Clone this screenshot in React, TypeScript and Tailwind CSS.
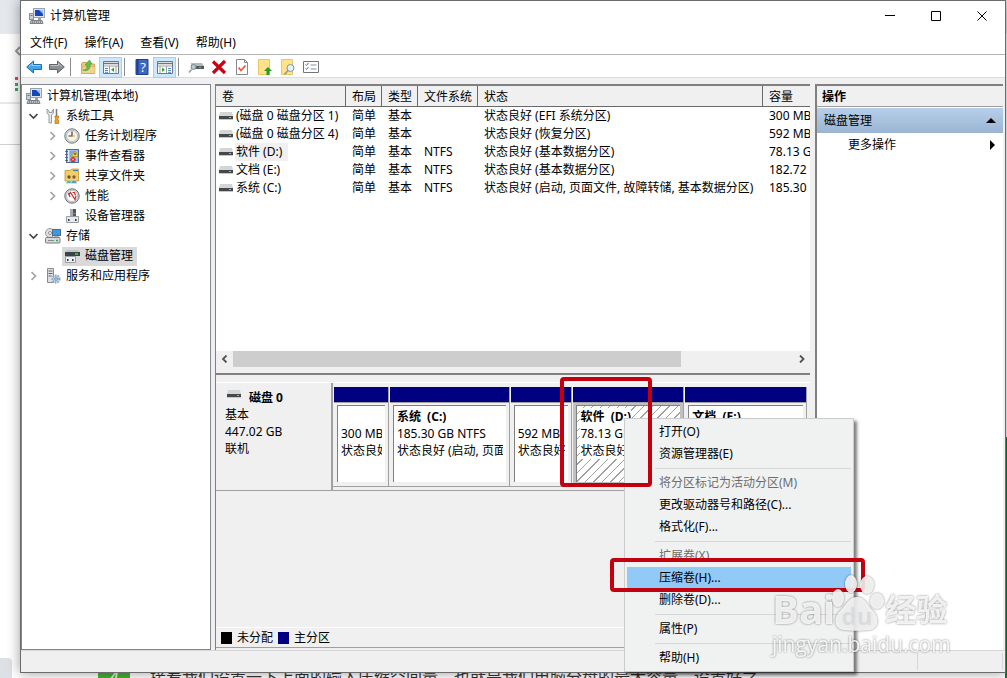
import type { ReactNode } from "react";
import clsx from "clsx";

interface Volume {
  name: string;
  layout: string;
  type: string;
  fs: string;
  status: string;
  capacity: string;
}

const VOLUMES: Volume[] = [
  { name: "(磁盘 0 磁盘分区 1)", layout: "简单", type: "基本", fs: "", status: "状态良好 (EFI 系统分区)", capacity: "300 MB" },
  { name: "(磁盘 0 磁盘分区 4)", layout: "简单", type: "基本", fs: "", status: "状态良好 (恢复分区)", capacity: "592 MB" },
  { name: "软件 (D:)", layout: "简单", type: "基本", fs: "NTFS", status: "状态良好 (基本数据分区)", capacity: "78.13 GB" },
  { name: "文档 (E:)", layout: "简单", type: "基本", fs: "NTFS", status: "状态良好 (基本数据分区)", capacity: "182.72 GB" },
  { name: "系统 (C:)", layout: "简单", type: "基本", fs: "NTFS", status: "状态良好 (启动, 页面文件, 故障转储, 基本数据分区)", capacity: "185.30 GB" },
];

const SELECTED_VOLUME = "软件 (D:)";

interface Partition {
  name: string;
  size: string;
  status: string;
  selected?: boolean;
}

const PARTITIONS: Partition[] = [
  { name: "", size: "300 MB", status: "状态良好" },
  { name: "系统  (C:)", size: "185.30 GB NTFS", status: "状态良好 (启动, 页面" },
  { name: "", size: "592 MB", status: "状态良好" },
  { name: "软件  (D:)", size: "78.13 GB NTFS", status: "状态良好 (基本", selected: true },
  { name: "文档  (E:)", size: "182.72 GB NTFS", status: "状态良好 (基本" },
];

interface MenuEntry {
  label: string;
  disabled?: boolean;
  active?: boolean;
}

// 每组之间用分隔线隔开
const CONTEXT_MENU: MenuEntry[][] = [
  [{ label: "打开(O)" }, { label: "资源管理器(E)" }],
  [{ label: "将分区标记为活动分区(M)", disabled: true }, { label: "更改驱动器号和路径(C)..." }, { label: "格式化(F)..." }],
  [{ label: "扩展卷(X)", disabled: true }, { label: "压缩卷(H)...", active: true }, { label: "删除卷(D)..." }],
  [{ label: "属性(P)" }],
  [{ label: "帮助(H)" }],
];

function Icon({ children, className = "size-4" }: { children: ReactNode; className?: string }) {
  return (
    <svg viewBox="0 0 16 16" className={clsx("shrink-0", className)} fill="none" aria-hidden="true">
      {children}
    </svg>
  );
}

function ComputerIcon() {
  return (
    <Icon>
      <rect x="4.5" y="0.5" width="11" height="9" fill="#dfe3e8" stroke="#9aa2ab" />
      <rect x="6" y="2" width="8" height="6" fill="#1646b8" />
      <path d="M10 2h4v4z" fill="#8fc0ff" />
      <path d="M9 10h3v2H9z" fill="#9aa1a8" />
      <rect x="0.5" y="5.5" width="4" height="6" fill="#c9ced3" stroke="#8a949e" />
      <path d="M1.500 7.500h2" stroke="#2aa03c" />
      <path d="M2 12.500h11l1 3H1z" fill="#b9c0c8" stroke="#7a828b" />
      <path d="M3 14h9" stroke="#555" strokeDasharray="1 1" />
    </Icon>
  );
}

function ToolsIcon() {
  return (
    <Icon>
      <path d="M2 1v4l2 2v8h2.500V7l2-2V1L7 3v1.500H4V3z" fill="#e8eaec" stroke="#80868c" strokeWidth=".8" />
      <path d="M11.500 1v7" stroke="#777" strokeWidth="1.500" />
      <path d="M10 8h3.500v2l-.5.500v1l.5.500v3.500H10V12l.5-.5v-1L10 10z" fill="#f0a020" stroke="#b57208" strokeWidth=".7" />
    </Icon>
  );
}

function ClockIcon() {
  return (
    <Icon>
      <circle cx="8" cy="8" r="7.200" fill="#d5d9dd" stroke="#74797e" />
      <circle cx="8" cy="8" r="5.500" fill="#f7f3e6" stroke="#a6abb0" strokeWidth=".6" />
      <path d="M8 3.500V8H4.500" stroke="#39424d" strokeWidth="1.200" />
      <path d="M8 8h3" stroke="#e0a02a" />
    </Icon>
  );
}

function EventIcon() {
  return (
    <Icon>
      <rect x="2.500" y="1.500" width="12" height="13" fill="#9dc0ea" stroke="#4a6b9c" />
      <path d="M4.500 2v12" stroke="#e8f0fa" />
      <path d="M6 4h4M6 6h2M6 8h1" stroke="#5c7fb0" strokeWidth=".8" />
      <path d="M1 3.500h3M1 6.500h3M1 9.500h3M1 12.500h3" stroke="#555" strokeWidth=".8" />
      <path d="M11 3l3.500 5.500h-7z" fill="#ffd233" stroke="#a97a00" strokeWidth=".6" />
      <path d="M11 5v2" stroke="#222" />
      <circle cx="9" cy="11.500" r="2.600" fill="#d8272c" />
      <path d="M8 10.500l2 2m0-2l-2 2" stroke="#fff" strokeWidth=".8" />
    </Icon>
  );
}

function SharedIcon() {
  return (
    <Icon>
      <path d="M1 5V2.500h5L8 1h6.500v12H1z" fill="#f2cf66" stroke="#c39531" strokeWidth=".8" />
      <path d="M9 2.500h5" stroke="#3b7fd0" strokeWidth="1.200" />
      <circle cx="5" cy="9" r="1.700" fill="#6b563d" />
      <circle cx="10" cy="9" r="1.700" fill="#8a5a2b" />
      <path d="M2 15.500c0-4.500 6-4.500 6 0z" fill="#5fbb94" stroke="#fff" strokeWidth=".4" />
      <path d="M7 15.500c0-4.500 6-4.500 6 0z" fill="#5b98d6" stroke="#fff" strokeWidth=".4" />
    </Icon>
  );
}

function PerformanceIcon() {
  return (
    <Icon>
      <circle cx="8" cy="8" r="7.200" fill="#d5d5d8" stroke="#6e6e72" />
      <circle cx="8" cy="8" r="5.500" fill="#fff" stroke="#999" strokeWidth=".5" />
      <path d="M4.500 6.500l2-2 4.500 7 1-3.500" stroke="#cf2b2f" strokeWidth="1.200" />
      <path d="M4.500 5l1.500 4M8.500 4.500h2l1 3" stroke="#cf2b2f" strokeWidth="1.200" />
    </Icon>
  );
}

function DeviceIcon() {
  return (
    <Icon>
      <path d="M6 1h6v8H6z" fill="#50565c" />
      <path d="M6 1h3v7H6z" fill="#a5abb0" />
      <path d="M9.500 5.500h2" stroke="#2fd04c" />
      <path d="M2.500 8.500h12v6h-12z" fill="#e7e9eb" stroke="#989da2" />
      <path d="M4 11h1.500v2H4zM11 11h1.500v2H11z" fill="#33383d" />
    </Icon>
  );
}

function StorageIcon() {
  return (
    <Icon>
      <circle cx="5" cy="5" r="4.500" fill="#dfe2e5" stroke="#90969c" />
      <circle cx="5" cy="5" r="1.500" fill="#fff" stroke="#8b9197" />
      <rect x="7.500" y="1.500" width="8" height="6" fill="#3a98e8" stroke="#5b6b7c" />
      <path d="M9 9h5" stroke="#666" />
      <rect x="0.500" y="9.500" width="14.500" height="5.500" rx="1" fill="#d8dadd" stroke="#777d83" />
      <path d="M3 12.500h6" stroke="#888" />
      <path d="M11 12.500h2" stroke="#22b53d" strokeWidth="1.500" />
    </Icon>
  );
}

function DiskMgmtIcon() {
  return (
    <Icon>
      <path d="M3 2h11l2 2H1z" fill="#bfc4c8" />
      <path d="M1 4h15v4H1z" fill="#3d4246" />
      <path d="M11 6h3" stroke="#2fe04c" strokeWidth="1.500" />
      <path d="M1.500 8.500h10v6h-10z" fill="#eceeef" stroke="#9a9fa4" />
      <path d="M3 11h1.500v2H3zM8 11h1.500v2H8z" fill="#33383d" />
    </Icon>
  );
}

function ServicesIcon() {
  return (
    <Icon>
      <path d="M2.500 .5h6v14h-6z" fill="#dde0e3" stroke="#868c92" />
      <path d="M3.500 3h4M3.500 5.500h4M3.500 8h3" stroke="#666" />
      <circle cx="11" cy="11" r="3.500" fill="#c9dcef" stroke="#7f9fc0" strokeDasharray="1.500 1" strokeWidth="2" />
      <circle cx="11" cy="11" r="1.300" fill="#fff" stroke="#5e83a8" />
    </Icon>
  );
}

function DriveIcon() {
  return (
    <svg viewBox="0 0 14 8" className="h-2 w-3.5 shrink-0" aria-hidden="true">
      <path d="M1 0h12l1 4H0z" fill="#d3d5d7" />
      <path d="M0 4h14v3H0z" fill="#46494c" />
      <path d="M0 7h14v1H0z" fill="#c4c7c9" />
      <path d="M10 5h2v1h-2z" fill="#3cf05a" />
    </svg>
  );
}

function ArrowIcon({ flip, fill, stroke }: { flip?: boolean; fill: string; stroke: string }) {
  return (
    <Icon className={clsx("size-4", flip && "-scale-x-100")}>
      <path d="M.7 8L7.500 2v3.500h8v5h-8V14z" fill={fill} stroke={stroke} />
      <path d="M3 7.500l3.500-3v2h8" stroke="#fff" strokeOpacity=".45" />
    </Icon>
  );
}

function FolderUpIcon() {
  return (
    <Icon>
      <path d="M1.500 14.500V4.500l1-1h4l1 1.500h7v9.500z" fill="#edc778" stroke="#cfa75c" />
      <path d="M1.500 14.500l1-7h12.500v7z" fill="#f2d38d" stroke="#cfa75c" strokeWidth=".6" />
      <path d="M3 11c3 0 4.500-2 4-5H5l4.500-5L12 5h-2c1 5-3 8-7 6z" fill="#5bc44d" stroke="#3a9a30" strokeWidth=".6" />
    </Icon>
  );
}

function PaneIcon({ flip }: { flip?: boolean }) {
  return (
    <Icon className={clsx("size-4", flip && "-scale-x-100")}>
      <path d="M.5 2.500h15v12H.5z" fill="#fff" stroke="#71767c" />
      <path d="M1 4.500h14" stroke="#71767c" strokeWidth="1.500" />
      <path d="M.5 7h15M6.500 7v7.500M13 7v7.500" stroke="#888" strokeWidth=".8" />
      <path d="M2 9.500h3M2 11.500h3M2 13.300h3" stroke="#3e78bd" strokeWidth=".9" />
      <path d="M11 8.500v4.500L8 10.800z" fill="#35a52c" />
    </Icon>
  );
}

function HelpIcon() {
  return (
    <Icon>
      <path d="M2 .5h12v15H2z" fill="#3c68c4" stroke="#20408c" />
      <path d="M2.500 1h2v14h-2z" fill="#20408c" />
      <text x="9" y="12.500" fontSize="13" textAnchor="middle" fill="#fff" fontFamily="Open Sans, sans-serif">
        ?
      </text>
    </Icon>
  );
}

function ConnectIcon() {
  return (
    <Icon>
      <path d="M3 4h11l2 3v3H3z" fill="#b4b9bd" />
      <path d="M3 7h13v3H3z" fill="#50565b" />
      <path d="M11 8.500h2" stroke="#32d44c" strokeWidth="1.500" />
      <circle cx="5.500" cy="8" r="2.500" fill="#b9c9d6" stroke="#7c8a95" />
      <path d="M3.500 10.500L1 13.500" stroke="#9aa0a6" strokeWidth="1.800" />
    </Icon>
  );
}

function DeleteIcon() {
  return (
    <Icon>
      <path d="M2 2.500L14 14M14 2L2 14" stroke="#c80414" strokeWidth="3.200" />
    </Icon>
  );
}

function CheckDocIcon() {
  return (
    <Icon>
      <path d="M2.500 .5h8l3 3v12h-11z" fill="#fff" stroke="#85898e" />
      <path d="M10.500 .5v3h3" stroke="#85898e" />
      <path d="M4.500 8.500L7 11.500l4.500-5" stroke="#ef5a33" strokeWidth="1.800" />
    </Icon>
  );
}

function NoteUpIcon() {
  return (
    <Icon>
      <path d="M1.500 .5h11v15h-11z" fill="#ffe28a" stroke="#e9c767" />
      <path d="M11 8L15 12h-2.500v4h-3v-4H7z" fill="#289b2b" />
    </Icon>
  );
}

function NoteSearchIcon() {
  return (
    <Icon>
      <path d="M1.500 .5h11v15h-11z" fill="#ffe28a" stroke="#e9c767" />
      <circle cx="10.500" cy="9" r="3.500" fill="#e4f1fb" stroke="#7a97b0" />
      <path d="M8 11.500L4.500 15.500" stroke="#8f9aa3" strokeWidth="1.600" />
    </Icon>
  );
}

function ListIcon() {
  return (
    <Icon>
      <path d="M.5 2.500h15v11H.5z" fill="#fff" stroke="#71767c" />
      <path d="M2.500 5.500l1 1 2-2.500M2.500 9.500l1 1 2-2.500" stroke="#2c79c9" />
      <path d="M7.500 6h6M7.500 10h6" stroke="#8b9096" />
    </Icon>
  );
}

function Chevron({ open }: { open?: boolean }) {
  return (
    <Icon>
      {open ? (
        <path d="M3.500 6l4 4 4-4" stroke="#404040" strokeWidth="1.600" />
      ) : (
        <path d="M5.500 4l4 4-4 4" stroke="#a0a0a0" strokeWidth="1.600" />
      )}
    </Icon>
  );
}

interface TreeNode {
  label: string;
  icon: ReactNode;
  indent: string;
  open?: boolean;
  leaf?: boolean;
  selected?: boolean;
}

const LEVEL_1 = "pl-1";
const LEVEL_2 = "pl-[23px]";

const TREE: TreeNode[] = [
  { label: "系统工具", icon: <ToolsIcon />, indent: LEVEL_1, open: true },
  { label: "任务计划程序", icon: <ClockIcon />, indent: LEVEL_2 },
  { label: "事件查看器", icon: <EventIcon />, indent: LEVEL_2 },
  { label: "共享文件夹", icon: <SharedIcon />, indent: LEVEL_2 },
  { label: "性能", icon: <PerformanceIcon />, indent: LEVEL_2 },
  { label: "设备管理器", icon: <DeviceIcon />, indent: LEVEL_2, leaf: true },
  { label: "存储", icon: <StorageIcon />, indent: LEVEL_1, open: true },
  { label: "磁盘管理", icon: <DiskMgmtIcon />, indent: LEVEL_2, leaf: true, selected: true },
  { label: "服务和应用程序", icon: <ServicesIcon />, indent: LEVEL_1 },
];

function NavTree() {
  return (
    <ul className="w-[190px] shrink-0 border border-[#828790] bg-white py-px">
      <li className="flex h-5 items-center gap-[5px] pl-1">
        <ComputerIcon />
        计算机管理(本地)
      </li>
      {TREE.map((node) => (
        <li key={node.label} className={clsx("flex h-5 items-center gap-px", node.indent)}>
          {node.leaf ? <span className="w-4" /> : <Chevron open={node.open} />}
          <span className={clsx("flex h-[19px] items-center gap-[5px] px-0.5 pr-1", node.selected && "bg-[#d9d9d9]")}>
            {node.icon}
            {node.label}
          </span>
        </li>
      ))}
    </ul>
  );
}

function ToolButton({ label, pressed, children }: { label: string; pressed?: boolean; children: ReactNode }) {
  return (
    <button
      type="button"
      aria-label={label}
      className={clsx(
        "flex h-[21px] w-[23px] shrink-0 items-center justify-center border",
        pressed ? "border-[#99d1ff] bg-[#cce8ff]" : "border-transparent"
      )}
    >
      {children}
    </button>
  );
}

function ToolSeparator() {
  return <span className="ml-0.5 mr-[5px] h-[18px] w-px bg-[#8c8c8c]" />;
}

function Toolbar() {
  return (
    <div className="flex h-[23px] shrink-0 items-center border-b border-[#dcdcdc] pl-px pt-0.5">
      <ToolButton label="后退">
        <ArrowIcon fill="#41a5ee" stroke="#1c6cab" />
      </ToolButton>
      <ToolButton label="前进">
        <ArrowIcon flip fill="#8c9092" stroke="#606466" />
      </ToolButton>
      <ToolSeparator />
      <ToolButton label="向上一级"><FolderUpIcon /></ToolButton>
      <ToolButton label="显示/隐藏控制台树" pressed><PaneIcon /></ToolButton>
      <ToolSeparator />
      <ToolButton label="帮助"><HelpIcon /></ToolButton>
      <ToolButton label="显示/隐藏操作窗格" pressed><PaneIcon flip /></ToolButton>
      <ToolSeparator />
      <ToolButton label="连接"><ConnectIcon /></ToolButton>
      <ToolButton label="删除"><DeleteIcon /></ToolButton>
      <ToolButton label="属性"><CheckDocIcon /></ToolButton>
      <ToolButton label="上移"><NoteUpIcon /></ToolButton>
      <ToolButton label="查找"><NoteSearchIcon /></ToolButton>
      <ToolButton label="列表"><ListIcon /></ToolButton>
    </div>
  );
}

function TitleBar() {
  return (
    <div className="flex h-[30px] shrink-0 items-center gap-[5px] pl-2">
      <ComputerIcon />
      <h1 className="flex-1">计算机管理</h1>
      <div className="flex">
        <button type="button" aria-label="最小化" className="flex h-7 w-[46px] items-center justify-center">
          <svg viewBox="0 0 11 11" className="size-[11px]"><path d="M0 4.500h10" stroke="#000" /></svg>
        </button>
        <button type="button" aria-label="最大化" className="flex h-7 w-[46px] items-center justify-center">
          <svg viewBox="0 0 11 11" className="size-[11px]"><path d="M.5 .5h9v9h-9z" fill="none" stroke="#000" /></svg>
        </button>
        <button type="button" aria-label="关闭" className="flex h-7 w-[46px] items-center justify-center">
          <svg viewBox="0 0 11 11" className="size-[11px]"><path d="M.5 .5l9 9M9.500 .5l-9 9" stroke="#000" /></svg>
        </button>
      </div>
    </div>
  );
}

function VolumeTable() {
  const th = "border-b border-r border-[#696969] bg-[#f0f0f0] p-0 pl-1.5 pt-0.5 text-left font-normal";
  return (
    <div className="h-[265px] shrink-0 overflow-hidden bg-white">
      <table className="w-full table-fixed border-separate border-spacing-0 whitespace-nowrap">
        <colgroup>
          <col className="w-[130px]" />
          <col className="w-9" />
          <col className="w-9" />
          <col className="w-[60px]" />
          <col className="w-[285px]" />
          <col />
        </colgroup>
        <thead>
          <tr className="h-[21px]">
            <th className={th}>卷</th>
            <th className={th}>布局</th>
            <th className={th}>类型</th>
            <th className={th}>文件系统</th>
            <th className={th}>状态</th>
            <th className={clsx(th, "border-r-0")}>容量</th>
          </tr>
        </thead>
        <tbody>
          {VOLUMES.map((v) => (
            <tr key={v.name} className="h-[18px]">
              <td className="p-0">
                <div className="flex items-center gap-0.5 pl-[3px]">
                  <DriveIcon />
                  <span className={clsx("pl-px leading-[18px]", v.name === SELECTED_VOLUME && "bg-[#f0f0f0] pr-1.5")}>
                    {v.name}
                  </span>
                </div>
              </td>
              <td className="p-0 pl-1.5">{v.layout}</td>
              <td className="p-0 pl-1.5">{v.type}</td>
              <td className="p-0 pl-1.5">{v.fs}</td>
              <td className="p-0 pl-1.5">{v.status}</td>
              <td className="overflow-hidden p-0 pl-1.5">{v.capacity}</td>
            </tr>
          ))}
        </tbody>
      </table>
    </div>
  );
}

function HorizontalScrollbar() {
  return (
    <div className="flex h-4 shrink-0 bg-[#f0f0f0]">
      <button type="button" aria-label="向左滚动" className="flex w-[17px] items-center justify-center">
        <svg viewBox="0 0 8 8" className="size-2"><path d="M5.500 .5L2 4l3.500 3.500" fill="none" stroke="#505050" strokeWidth="1.800" /></svg>
      </button>
      <div className="flex-1">
        <div className="h-full w-4/5 bg-[#cdcdcd]" />
      </div>
      <button type="button" aria-label="向右滚动" className="flex w-[17px] items-center justify-center">
        <svg viewBox="0 0 8 8" className="size-2"><path d="M2 .5L5.500 4 2 7.500" fill="none" stroke="#505050" strokeWidth="1.800" /></svg>
      </button>
    </div>
  );
}

function PartitionCell({ partition }: { partition: Partition }) {
  const { name, size, status, selected } = partition;
  const line = clsx("block w-fit max-w-full overflow-hidden", selected && "bg-white");
  return (
    <div className="flex min-w-0 flex-col border-r border-[#a0a0a0] pl-px">
      <div className="h-4 border-b border-[#a0a0a0] bg-[#000080]" />
      <div className={clsx("flex flex-1 px-[3px] pb-1 pt-0.5", selected && "bg-[#c0c0c0]")}>
        <div
          className={clsx(
            "min-w-0 flex-1 overflow-hidden whitespace-pre border-l border-t border-[#808080] px-[3px] pt-0.5 leading-[17px]",
            selected
              ? "bg-white bg-[repeating-linear-gradient(135deg,transparent_0_5px,#a0a0a0_5px_6px)]"
              : "bg-white"
          )}
        >
          <span className={clsx(line, "h-[17px] font-bold")}>{name}</span>
          <span className={line}>{size}</span>
          <span className={line}>{status}</span>
        </div>
      </div>
    </div>
  );
}

function DiskMap() {
  return (
    <div className="flex-1 pt-[7px]">
      <div className="flex h-[109px] border-b border-t border-[#a0a0a0] border-t-white">
        <div className="w-[117px] shrink-0 border-r-2 border-[#a0a0a0] pl-[9px] pt-1.5 leading-[17px]">
          <div className="flex gap-2 pl-0.5 pt-px">
            <DriveIcon />
            <strong className="-mt-px">磁盘 0</strong>
          </div>
          <p>基本</p>
          <p>447.02 GB</p>
          <p>联机</p>
        </div>
        <div className="mb-[3px] mr-[3px] grid flex-1 grid-cols-[56fr_121fr_63fr_112fr_123fr] border-b border-[#a0a0a0] pt-1">
          {PARTITIONS.map((p, i) => (
            <PartitionCell key={i} partition={p} />
          ))}
        </div>
      </div>
    </div>
  );
}

function Legend() {
  return (
    <div className="flex h-5 shrink-0 items-center gap-[5px] border-t border-white pl-[5px] pt-px">
      <span className="h-3 w-[11px] bg-black" />
      <span>未分配</span>
      <span className="h-3 w-[11px] bg-[#000080]" />
      <span>主分区</span>
    </div>
  );
}

function ActionsPane() {
  return (
    <aside className="w-[188px] shrink-0 border-l-2 border-t-2 border-[#808080] bg-white">
      <h2 className="flex h-[21px] items-center border-b border-[#a0a0a0] bg-[#f0f0f0] pl-[5px] pt-px font-bold">操作</h2>
      <button type="button" className="mt-px flex h-[25px] w-full items-center justify-between bg-linear-to-b from-[#b7cfea] to-[#9ab4d2] px-[7px]">
        磁盘管理
        <svg viewBox="0 0 10 5" className="h-[5px] w-2.5"><path d="M5 0l5 5H0z" /></svg>
      </button>
      <button type="button" className="flex h-6 w-full items-center justify-between pl-[31px] pr-2">
        更多操作
        <svg viewBox="0 0 5 10" className="h-2.5 w-[5px]"><path d="M0 0l5 5-5 5z" /></svg>
      </button>
    </aside>
  );
}

function ContextMenu() {
  return (
    <div
      role="menu"
      className="absolute left-[624px] top-[418px] w-[230px] border border-[#cccccc] bg-[#f0f2f2] p-0.5 shadow-[3px_3px_3px_rgba(0,0,0,0.5)]"
    >
      {CONTEXT_MENU.map((group, i) => (
        <div key={i}>
          {i > 0 && <hr className="my-[3px] ml-7 h-px border-0 bg-[#d7d7d7]" />}
          {group.map((item) => (
            <button
              key={item.label}
              type="button"
              role="menuitem"
              disabled={item.disabled}
              className={clsx(
                "flex h-[22px] w-full items-center pl-8",
                item.disabled && "text-[#6d6d6d]",
                item.active && "bg-[#91c9f7]"
              )}
            >
              {item.label}
            </button>
          ))}
        </div>
      ))}
    </div>
  );
}

// 窗口后面露出的网页
function PageBehind() {
  return (
    <div className="absolute inset-0 bg-white" aria-hidden="true">
      <div className="h-[34px] bg-[#e4e8ec]" />
      <svg viewBox="0 0 20 120" className="absolute left-0 top-[34px] h-[120px] w-5">
        <path d="M20 13l-4 4 4 4" fill="none" stroke="#9a9a9a" strokeWidth="2" />
        <path d="M15 43h3v3h-3z" fill="#d8475b" />
        <path d="M15 49h3v3h-3zM15 54h3v3h-3z" fill="#3aa860" />
        <path d="M0 69h20M0 110.500h20" stroke="#cfcfcf" />
      </svg>
      <div className="absolute bottom-0 left-0 h-5 w-3 rounded-tr bg-[#dde1e5]" />
      <div className="absolute bottom-0 right-0 h-[241px] w-0.5 bg-[#0b7a3c]" />
      <div className="absolute left-[98px] top-[663px] flex items-center gap-5 whitespace-nowrap text-base leading-7 text-[#333]">
        <span className="w-8 bg-[#44b035] text-center italic text-white">4</span>
        <span>接着我们设置一下上面的输入压缩空间量，也就是我们电脑分盘的最大容量，设置好之</span>
      </div>
    </div>
  );
}

function Watermark() {
  return (
    <div className="pointer-events-none absolute left-[772px] top-[568px] w-[180px] text-white/85 drop-shadow-[0_0_1px_rgba(0,0,0,0.55)]">
      <div className="flex h-16 items-end font-['Open_Sans','Noto_Sans_CJK_SC',sans-serif] font-bold">
        <span className="text-[40px] leading-[46px]">Bai</span>
        <svg viewBox="0 0 54 60" className="-ml-1 h-[60px] w-[54px] shrink-0">
          <g fill="#fff" fillOpacity=".85">
            <ellipse cx="7" cy="26" rx="6" ry="9" />
            <ellipse cx="20" cy="12" rx="6" ry="9" />
            <ellipse cx="36" cy="13" rx="7" ry="9" />
            <ellipse cx="46" cy="29" rx="7" ry="8" />
            <path d="M26 25c8 0 10 8 16 14 7 7 6 18-4 19-6 1-18 1-25 0C3 57 2 46 9 39c6-6 9-14 17-14z" />
          </g>
          <text x="26" y="53" fontSize="24" textAnchor="middle" fill="#d8dcde" fontFamily="Open Sans, sans-serif" fontWeight="700">
            du
          </text>
        </svg>
        <span className="text-[31px] leading-[46px]">经验</span>
      </div>
      <div className="text-[21px] leading-6 font-['Open_Sans',sans-serif]">jingyan.baidu.com</div>
    </div>
  );
}

export default function App() {
  return (
    <div className="relative h-screen overflow-hidden font-['Noto_Sans','Noto_Sans_CJK_SC',sans-serif] text-xs leading-4 text-black">
      <PageBehind />

      <main className="relative ml-5 mr-px flex h-[calc(100vh-5px)] flex-col border border-[#6b6b6b] bg-white shadow-[0_0_12px_rgba(0,0,0,0.4)]">
        <TitleBar />
        <nav className="flex h-6 shrink-0 items-center gap-px border-b border-[#b4b4b4] pl-px">
          {["文件(F)", "操作(A)", "查看(V)", "帮助(H)"].map((label) => (
            <button key={label} type="button" className="px-2">
              {label}
            </button>
          ))}
        </nav>
        <Toolbar />

        <div className="flex min-h-0 flex-1 gap-[5px] bg-[#f0f0f0] pr-0.5 pt-1.5">
          <NavTree />
          <section className="-ml-px flex min-w-0 flex-1 flex-col border-l border-t-2 border-[#808080]">
            <VolumeTable />
            <HorizontalScrollbar />
            <div className="h-2 shrink-0 border-b-2 border-[#808080]" />
            <DiskMap />
            <Legend />
            <div className="h-[3px] shrink-0 border-t border-[#a0a0a0]" />
          </section>
          <ActionsPane />
        </div>

        <footer className="flex h-[22px] shrink-0 justify-end border-t border-[#d7d7d7] bg-[#f0f0f0] py-0.5 pr-0.5">
          <span className="w-[86px] border-x border-[#d7d7d7]" />
        </footer>
      </main>

      <ContextMenu />
      <div className="pointer-events-none absolute left-[560px] top-[377px] h-[110px] w-[92px] rounded border-4 border-[#c4000f]" />
      <div className="pointer-events-none absolute left-[610px] top-[558px] h-[34px] w-[255px] rounded border-4 border-[#c4000f]" />
      <Watermark />
    </div>
  );
}
